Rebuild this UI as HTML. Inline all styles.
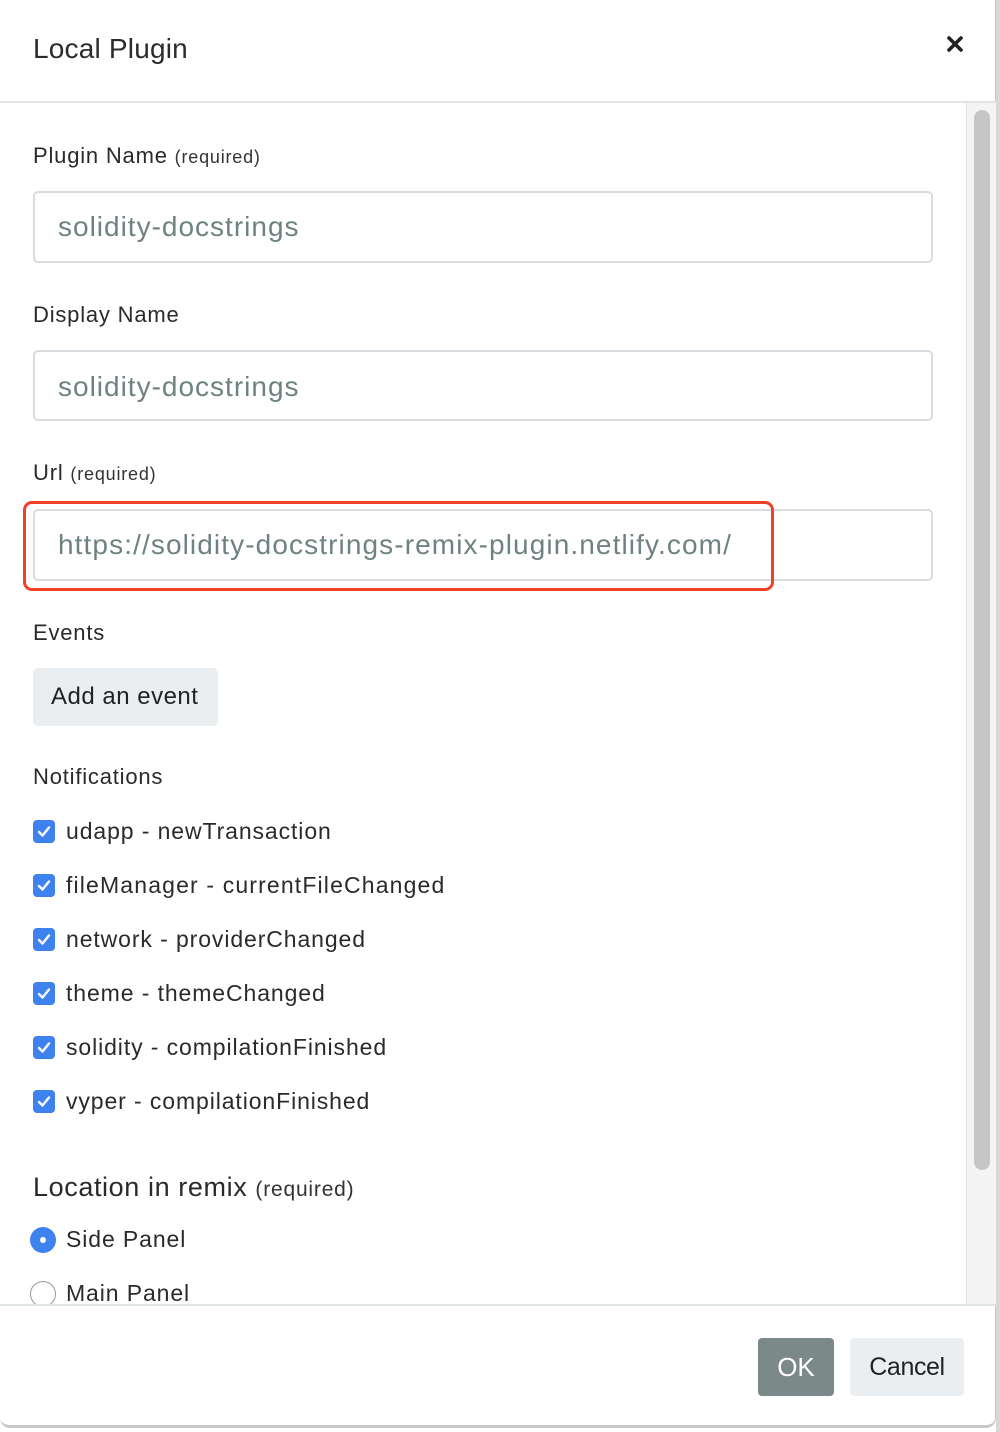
<!DOCTYPE html>
<html><head><meta charset="utf-8"><style>
*{margin:0;padding:0;box-sizing:border-box}
body{width:1000px;height:1432px;background:#fff;position:relative;overflow:hidden;font-family:"Liberation Sans",sans-serif;color:#222}
.a{position:absolute;white-space:nowrap}
.lbl{font-size:22px;line-height:30px;color:#2a2a2a;letter-spacing:0.8px}
.req{font-size:18px;color:#333;letter-spacing:0.8px}
.inp{position:absolute;left:33px;width:900px;height:72px;border:2px solid #d7dde0;border-radius:5px}
.val{font-size:28px;line-height:36px;color:#6f8282;letter-spacing:1px}
.cb{position:absolute;left:33px;width:22px;height:23px;background:#3d82ee;border-radius:4px}
.cb svg{position:absolute;left:4px;top:5px}
.ct{font-size:23px;line-height:30px;color:#2a2a2a;left:66px;letter-spacing:0.9px}
</style></head><body>
<div class="a" style="left:0;top:0;width:996px;height:1428px;border-right:1px solid #c8c8c8;border-bottom:3px solid #c8c8c8;border-radius:0 0 10px 10px"></div>
<div class="a" style="left:996px;top:0;width:4px;height:1432px;background:#d8d8d8"></div>
<div class="a" style="left:33px;top:31px;font-size:28px;line-height:36px;color:#2b2b2b;letter-spacing:0.2px">Local Plugin</div>
<svg class="a" style="left:946px;top:35px" width="18" height="18" viewBox="0 0 18 18"><path d="M3 3L15 15M15 3L3 15" stroke="#222" stroke-width="3.6" stroke-linecap="round"/></svg>
<div class="a" style="left:0;top:101px;width:996px;height:2px;background:#dfe4e7"></div>
<div class="a" style="left:966px;top:103px;width:30px;height:1202px;background:#f4f4f4;border-left:1px solid #e6e6e6"></div>
<div class="a" style="left:974px;top:110px;width:16px;height:1060px;background:#c6c6c6;border-radius:8px"></div>

<div class="a lbl" style="left:33px;top:141px">Plugin Name <span class="req">(required)</span></div>
<div class="inp" style="top:191px"></div>
<div class="a val" style="left:58px;top:209px">solidity-docstrings</div>

<div class="a lbl" style="left:33px;top:300px">Display Name</div>
<div class="inp" style="top:350px;height:71px"></div>
<div class="a val" style="left:58px;top:369px">solidity-docstrings</div>

<div class="a lbl" style="left:33px;top:458px">Url <span class="req">(required)</span></div>
<div class="inp" style="top:509px"></div>
<div class="a val" style="left:58px;top:527px;letter-spacing:1.1px">https://solidity-docstrings-remix-plugin.netlify.com/</div>
<div class="a" style="left:23px;top:501px;width:751px;height:90px;border:3px solid #f0402a;border-radius:9px"></div>

<div class="a lbl" style="left:33px;top:618px">Events</div>
<div class="a" style="left:33px;top:668px;width:185px;height:58px;background:#ebeef0;border-radius:5px"></div>
<div class="a" style="left:51px;top:682px;font-size:24px;line-height:30px;color:#222;letter-spacing:0.5px">Add an event</div>

<div class="a lbl" style="left:33px;top:762px">Notifications</div>

<div class="cb" style="top:820px"><svg width="14" height="13" viewBox="0 0 14 13"><path d="M2 7L5.5 10.5L12 2.5" stroke="#fff" stroke-width="2.4" fill="none" stroke-linecap="round" stroke-linejoin="round"/></svg></div>
<div class="a ct" style="top:816px">udapp - newTransaction</div>
<div class="cb" style="top:874px"><svg width="14" height="13" viewBox="0 0 14 13"><path d="M2 7L5.5 10.5L12 2.5" stroke="#fff" stroke-width="2.4" fill="none" stroke-linecap="round" stroke-linejoin="round"/></svg></div>
<div class="a ct" style="top:870px;letter-spacing:1.15px">fileManager - currentFileChanged</div>
<div class="cb" style="top:928px"><svg width="14" height="13" viewBox="0 0 14 13"><path d="M2 7L5.5 10.5L12 2.5" stroke="#fff" stroke-width="2.4" fill="none" stroke-linecap="round" stroke-linejoin="round"/></svg></div>
<div class="a ct" style="top:924px">network - providerChanged</div>
<div class="cb" style="top:982px"><svg width="14" height="13" viewBox="0 0 14 13"><path d="M2 7L5.5 10.5L12 2.5" stroke="#fff" stroke-width="2.4" fill="none" stroke-linecap="round" stroke-linejoin="round"/></svg></div>
<div class="a ct" style="top:978px">theme - themeChanged</div>
<div class="cb" style="top:1036px"><svg width="14" height="13" viewBox="0 0 14 13"><path d="M2 7L5.5 10.5L12 2.5" stroke="#fff" stroke-width="2.4" fill="none" stroke-linecap="round" stroke-linejoin="round"/></svg></div>
<div class="a ct" style="top:1032px">solidity - compilationFinished</div>
<div class="cb" style="top:1090px"><svg width="14" height="13" viewBox="0 0 14 13"><path d="M2 7L5.5 10.5L12 2.5" stroke="#fff" stroke-width="2.4" fill="none" stroke-linecap="round" stroke-linejoin="round"/></svg></div>
<div class="a ct" style="top:1086px">vyper - compilationFinished</div>

<div class="a" style="left:33px;top:1170px;font-size:27px;line-height:34px;color:#2a2a2a;letter-spacing:0.6px">Location in remix <span class="req" style="font-size:21px;letter-spacing:0.8px">(required)</span></div>
<div class="a" style="left:30px;top:1227px;width:26px;height:26px;border-radius:50%;background:#3d82ee"></div>
<div class="a" style="left:40px;top:1237px;width:6px;height:6px;border-radius:50%;background:#fff"></div>
<div class="a ct" style="top:1224px">Side Panel</div>
<div style="position:absolute;left:0;top:1260px;width:966px;height:44px;overflow:hidden">
<div class="a" style="left:30px;top:21px;width:26px;height:26px;border-radius:50%;border:1.5px solid #999"></div>
<div class="a ct" style="top:18px">Main Panel</div>
</div>
<div class="a" style="left:0;top:1304px;width:996px;height:2px;background:#dfe4e7"></div>
<div class="a" style="left:758px;top:1338px;width:76px;height:58px;background:#7b8a89;border-radius:4px;color:#fff;font-size:26px;line-height:58px;text-align:center">OK</div>
<div class="a" style="left:850px;top:1338px;width:114px;height:58px;background:#ebeef0;border-radius:4px;color:#222;font-size:25px;line-height:58px;text-align:center;letter-spacing:-0.4px">Cancel</div>
</body></html>
